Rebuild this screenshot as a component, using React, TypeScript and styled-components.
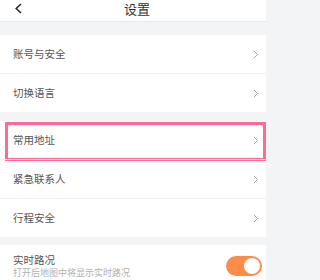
import React from 'react';
import styled, { createGlobalStyle } from 'styled-components';

const GlobalStyle = createGlobalStyle`
    html, body {
        margin: 0;
        padding: 0;
        background: #f3f4f6;
    }
    body {
        font-family: "Noto Sans CJK SC", "Noto Sans", sans-serif;
        -webkit-font-smoothing: antialiased;
    }
`;

const Page = styled.div`
    width: 266px;
    height: 280px;
    overflow: hidden;
    background: #f3f4f6;
    display: flex;
    flex-direction: column;
`;

const Header = styled.div`
    height: 22px;
    flex-shrink: 0;
    box-sizing: border-box;
    background: #fff;
    border-bottom: 1px solid #ebebeb;
    display: grid;
    grid-template-columns: 40px 1fr 40px;
    align-items: start;
    padding: 1px 0 0 14px;
`;

const BackButton = styled.div`
    display: flex;
    align-items: center;
    padding-top: 2px;
`;

const Title = styled.div`
    text-align: center;
    font-size: 13px;
    line-height: 15px;
    color: #333;
    padding-right: 6px;
`;

const Group = styled.div<{ gap: number }>`
    margin-top: ${p => p.gap}px;
    background: #fff;
    display: flex;
    flex-direction: column;
`;

const Row = styled.div<{ highlighted?: boolean }>`
    position: relative;
    height: 38px;
    flex-shrink: 0;
    display: flex;
    align-items: center;
    justify-content: space-between;
    padding: 0 7px 0 13px;
    & + & {
        border-top: 1px solid #f1f1f1;
    }
    ${p => p.highlighted && `
        &::after {
            content: '';
            position: absolute;
            left: 5px;
            right: 0;
            top: 1px;
            bottom: -2px;
            border: 3px solid #fc6b94;
            pointer-events: none;
        }
    `}
`;

const Label = styled.span`
    font-size: 10.5px;
    color: #555;
    line-height: 12px;
`;

const TextBlock = styled.div`
    display: flex;
    flex-direction: column;
    gap: 1px;
    padding-top: 4px;
`;

const Hint = styled.span`
    font-size: 9px;
    color: #b0b0b0;
    line-height: 11px;
`;

const Toggle = styled.div<{ on: boolean }>`
    width: 36px;
    height: 20px;
    border-radius: 10px;
    background: ${p => (p.on ? '#fd8c49' : '#ddd')};
    position: relative;
    margin-right: -3px;
    margin-top: 4px;
    &::after {
        content: '';
        position: absolute;
        top: 2px;
        ${p => (p.on ? 'right: 2px;' : 'left: 2px;')}
        width: 16px;
        height: 16px;
        border-radius: 50%;
        background: #fff;
    }
`;

const Chevron = () => (
    <svg width="6" height="9" viewBox="0 0 6 9">
        <path d="M1 1 L4.5 4.5 L1 8" fill="none" stroke="#a8a8a8" strokeWidth="1" />
    </svg>
);

const BackIcon = () => (
    <svg width="9" height="11" viewBox="0 0 9 11">
        <path d="M7 1 L2.2 5.5 L7 10" fill="none" stroke="#222" strokeWidth="1.5" />
    </svg>
);

export default function App() {
    return (
        <>
            <GlobalStyle />
            <Page>
                <Header>
                    <BackButton><BackIcon /></BackButton>
                    <Title>设置</Title>
                    <div />
                </Header>
                <Group gap={13}>
                    <Row><Label>账号与安全</Label><Chevron /></Row>
                    <Row><Label>切换语言</Label><Chevron /></Row>
                </Group>
                <Group gap={9}>
                    <Row highlighted><Label>常用地址</Label><Chevron /></Row>
                    <Row><Label>紧急联系人</Label><Chevron /></Row>
                    <Row><Label>行程安全</Label><Chevron /></Row>
                </Group>
                <Group gap={8}>
                    <Row>
                        <TextBlock>
                            <Label>实时路况</Label>
                            <Hint>打开后地图中将显示实时路况</Hint>
                        </TextBlock>
                        <Toggle on />
                    </Row>
                </Group>
            </Page>
        </>
    );
}
